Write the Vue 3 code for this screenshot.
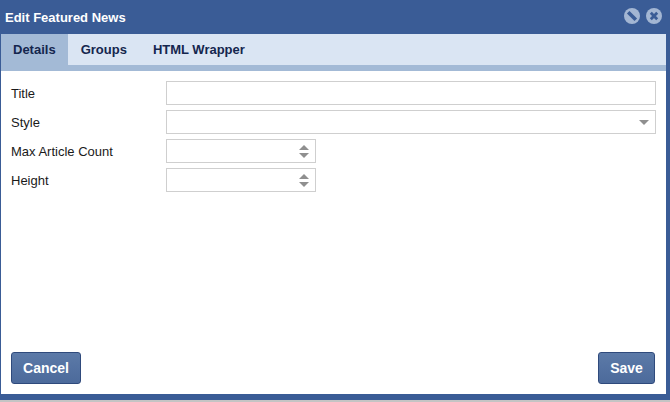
<template>
  <div class="dialog">
    <header class="titlebar">
      <span class="title">Edit Featured News</span>
      <div class="actions">
        <svg class="icon" viewBox="0 0 16 16">
          <circle cx="8" cy="8" r="8" fill="#a3b6d3" />
          <path d="M4.2 4.2 11.8 11.8" stroke="#3a5c96" stroke-width="3.6" />
        </svg>
        <svg class="icon" viewBox="0 0 16 16">
          <circle cx="8" cy="8" r="8" fill="#a3b6d3" />
          <path d="M4.8 4.8 11.2 11.2M11.2 4.8 4.8 11.2" stroke="#3a5c96" stroke-width="2.8" />
        </svg>
      </div>
    </header>
    <nav class="tabs">
      <div v-for="(tab, i) in tabs" :key="tab" class="tab" :class="{ active: i === 0 }">{{ tab }}</div>
    </nav>
    <main class="body">
      <div class="fields">
        <div class="row">
          <label>Title</label>
          <div class="input full"></div>
        </div>
        <div class="row">
          <label>Style</label>
          <div class="input full">
            <span class="arrow down"></span>
          </div>
        </div>
        <div class="row">
          <label>Max Article Count</label>
          <div class="input short">
            <span class="spin"><span class="arrow up"></span><span class="arrow down"></span></span>
          </div>
        </div>
        <div class="row">
          <label>Height</label>
          <div class="input short">
            <span class="spin"><span class="arrow up"></span><span class="arrow down"></span></span>
          </div>
        </div>
      </div>
      <footer class="footer">
        <button class="btn cancel">Cancel</button>
        <button class="btn save">Save</button>
      </footer>
    </main>
    <div class="page-edge"></div>
  </div>
</template>

<script setup>
const tabs = ['Details', 'Groups', 'HTML Wrapper']
</script>

<style>
html, body { margin: 0; background: #fff; }
</style>

<style scoped>
.dialog {
  width: 670px;
  height: 402px;
  display: flex;
  flex-direction: column;
  background: #3a5c96;
  font-family: "Liberation Sans", Arial, sans-serif;
  overflow: hidden;
}
.titlebar {
  height: 34px;
  flex: none;
  display: flex;
  align-items: center;
  justify-content: space-between;
  padding: 0 8px 0 5px;
}
.title {
  color: #fff;
  font-size: 13px;
  font-weight: bold;
}
.actions {
  display: flex;
  gap: 6px;
  margin-bottom: 2px;
}
.icon {
  width: 16px;
  height: 16px;
  display: block;
}
.tabs {
  flex: none;
  height: 31px;
  margin: 0 4px 0 1px;
  display: flex;
  background: #dae5f3;
  border-bottom: 6px solid #a3bad6;
}
.tab {
  padding: 0 13px;
  line-height: 31px;
  font-size: 13px;
  font-weight: bold;
  color: #14264e;
}
.tab.active {
  background: #a3bad6;
  padding: 0 12px;
}
.body {
  flex: 1;
  margin: 0 4px 0 1px;
  background: #fff;
  display: flex;
  flex-direction: column;
  padding: 10px;
  min-height: 0;
}
.fields {
  flex: 1;
  display: flex;
  flex-direction: column;
  gap: 5px;
}
.row {
  display: flex;
  align-items: center;
  height: 24px;
}
label {
  width: 155px;
  flex: none;
  font-size: 13px;
  color: #1a1a1a;
}
.input {
  height: 24px;
  box-sizing: border-box;
  border: 1px solid #cfcfcf;
  background: #fff;
  display: flex;
  align-items: center;
  justify-content: flex-end;
  padding-right: 6px;
}
.full { flex: 1; }
.short { width: 150px; }
.spin {
  display: flex;
  flex-direction: column;
  gap: 3px;
}
.arrow {
  display: block;
  width: 0;
  height: 0;
  border-left: 5px solid transparent;
  border-right: 5px solid transparent;
}
.arrow.up { border-bottom: 5px solid #8f8f8f; }
.arrow.down { border-top: 5px solid #8f8f8f; }
.footer {
  flex: none;
  display: flex;
  justify-content: space-between;
  margin-right: 1px;
}
.btn {
  height: 32px;
  box-sizing: border-box;
  border: 1px solid #2f4a7c;
  border-radius: 3px;
  background: linear-gradient(#5c7aa8, #4c6a9b);
  color: #fff;
  font-family: inherit;
  font-size: 14px;
  font-weight: bold;
  padding: 0;
}
.cancel { width: 70px; }
.save { width: 57px; }
.page-edge {
  flex: none;
  height: 8px;
  background: #3a5c96;
  border-bottom: 2px solid #c4c4c4;
  box-sizing: border-box;
}
</style>
